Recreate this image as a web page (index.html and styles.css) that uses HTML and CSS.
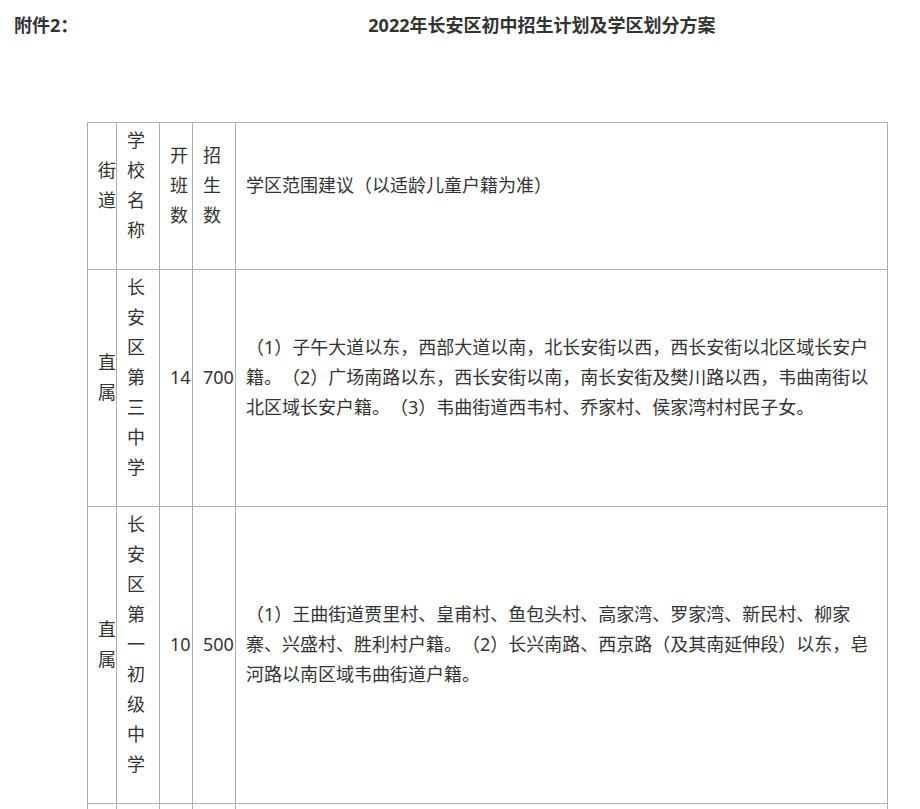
FILE: index.html
```html
<!DOCTYPE html>
<html lang="zh-CN">
<head>
<meta charset="utf-8">
<title>2022年长安区初中招生计划及学区划分方案</title>
<link rel="stylesheet" href="styles.css">
</head>
<body>
<div class="page">
  <div class="head">
    <span class="att">附件2：</span>
    <span class="title">2022年长安区初中招生计划及学区划分方案</span>
  </div>
  <table class="plan">
    <colgroup>
      <col class="c1"><col class="c2"><col class="c3"><col class="c4"><col class="c5">
    </colgroup>
    <tr>
      <td>街道</td>
      <td>学校名称</td>
      <td>开班数</td>
      <td>招生数</td>
      <td>学区范围建议（以适龄儿童户籍为准）</td>
    </tr>
    <tr>
      <td>直属</td>
      <td>长安区第三中学</td>
      <td>14</td>
      <td>700</td>
      <td>（1）子午大道以东，西部大道以南，北长安街以西，西长安街以北区域长安户籍。（2）广场南路以东，西长安街以南，南长安街及樊川路以西，韦曲南街以北区域长安户籍。（3）韦曲街道西韦村、乔家村、侯家湾村村民子女。</td>
    </tr>
    <tr>
      <td>直属</td>
      <td>长安区第一初级中学</td>
      <td>10</td>
      <td>500</td>
      <td>（1）王曲街道贾里村、皇甫村、鱼包头村、高家湾、罗家湾、新民村、柳家寨、兴盛村、胜利村户籍。（2）长兴南路、西京路（及其南延伸段）以东，皂河路以南区域韦曲街道户籍。</td>
    </tr>
    <tr class="more">
      <td></td><td></td><td></td><td></td><td></td>
    </tr>
  </table>
</div>
</body>
</html>
```

FILE: styles.css
```css
html, body {
  margin: 0;
  padding: 0;
  background: #ffffff;
  overflow: hidden;
}

body {
  font-family: "Noto Sans", "Noto Sans CJK SC", sans-serif;
  color: #333333;
  text-spacing-trim: space-all;
}

.page {
  padding: 10px 0 0 0;
}

.head {
  display: flex;
  align-items: center;
  height: 30px;
  padding-left: 14px;
  font-size: 18px;
  font-weight: bold;
  line-height: 30px;
  color: #333333;
}

.title {
  margin-left: 290px;
}

.plan {
  margin: 82px 0 0 87px;
  width: 800px;
  table-layout: fixed;
  border-collapse: collapse;
  font-size: 18px;
  line-height: 30px;
}

.plan td {
  border: 1px solid #b0b0b0;
  padding: 2px 10px 24px 10px;
  vertical-align: middle;
  text-align: left;
  white-space: normal;
}

.c1 { width: 29px; }
.c2 { width: 43px; }
.c3 { width: 33px; }
.c4 { width: 43px; }
.c5 { width: 652px; }

.more td {
  height: 60px;
}
```
